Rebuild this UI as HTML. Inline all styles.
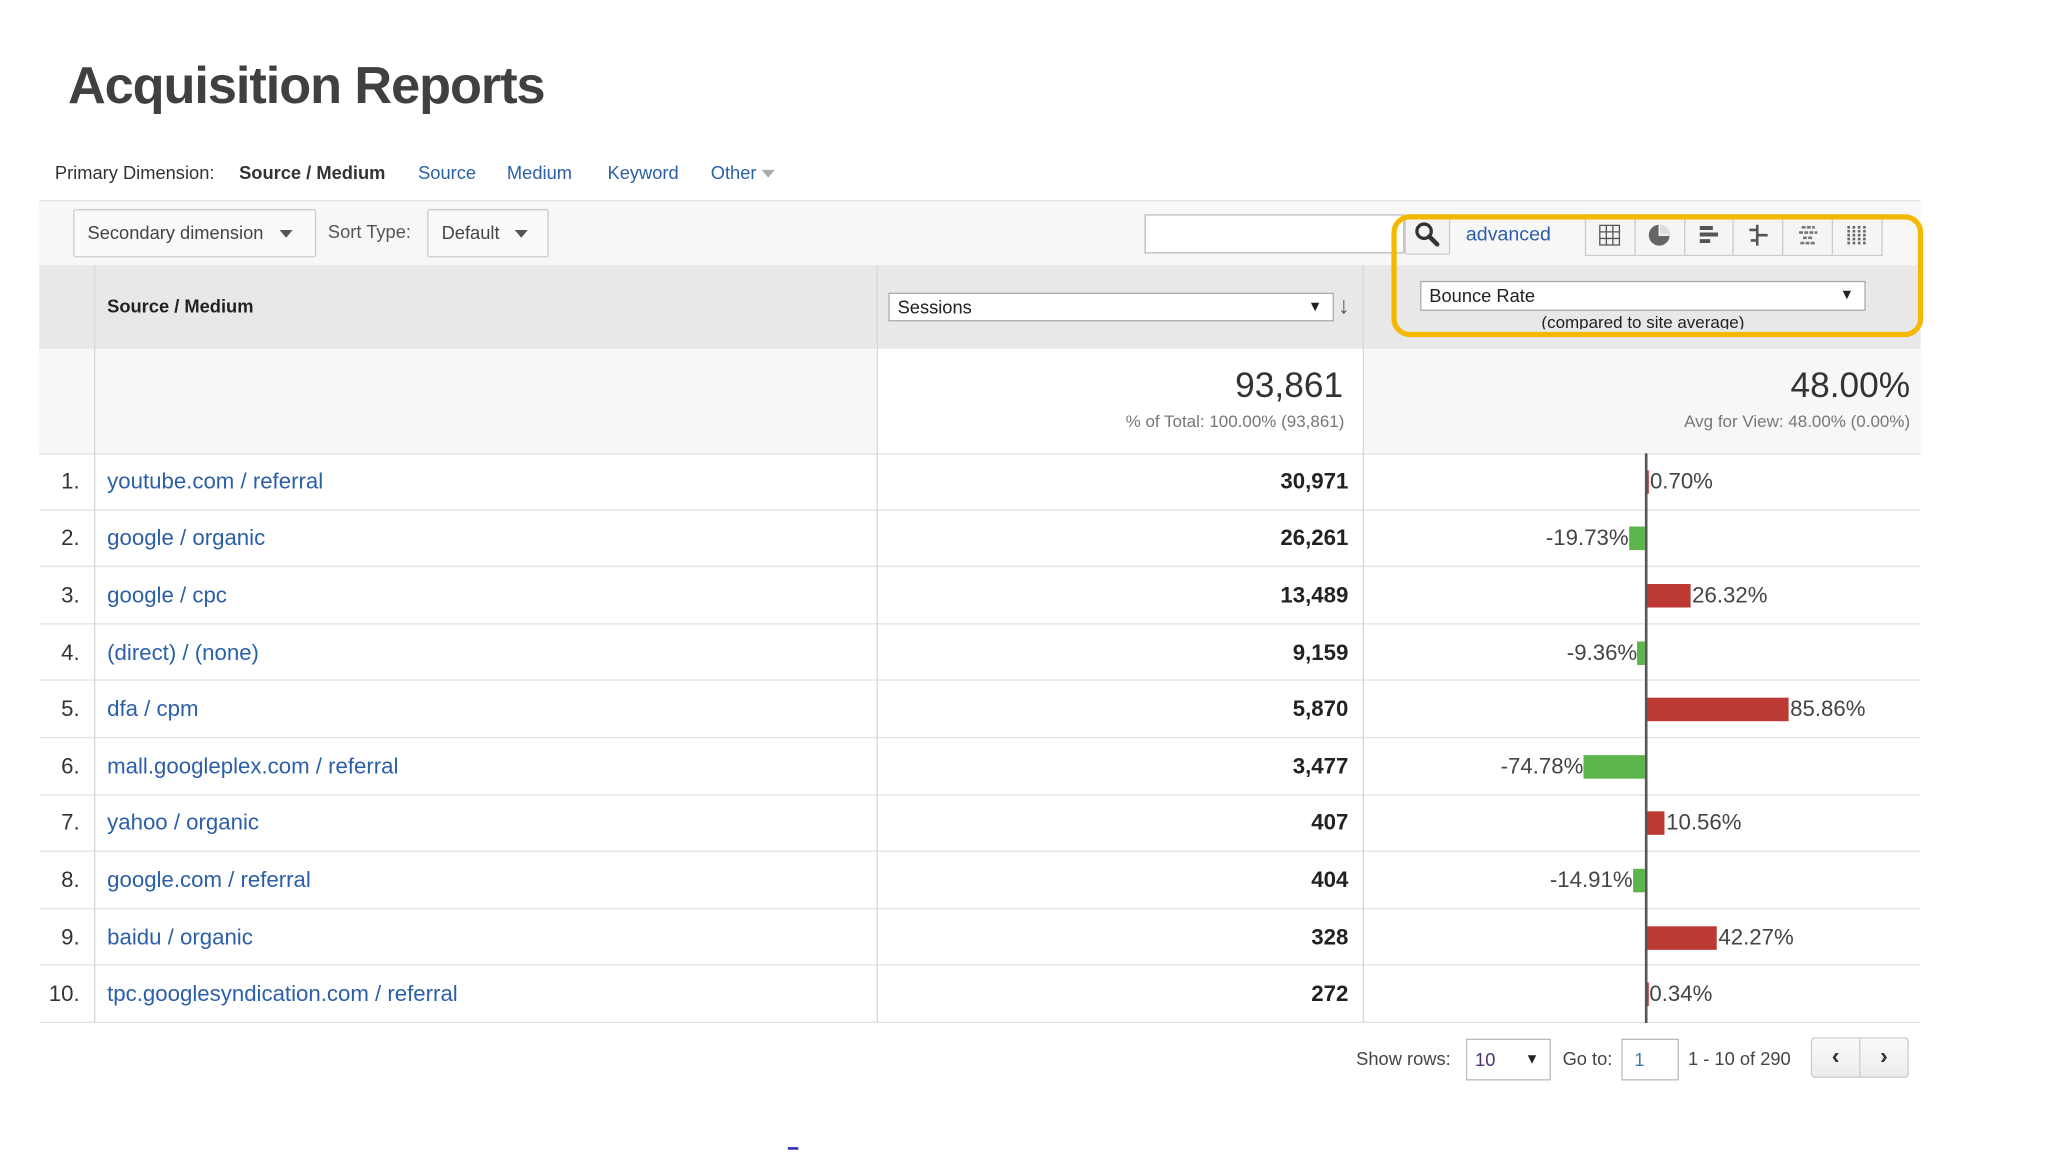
<!DOCTYPE html>
<html><head><meta charset="utf-8"><style>
html,body{margin:0;padding:0;background:#fff;overflow:hidden;width:2048px;height:1152px}
#w{position:absolute;left:0;top:0;width:1568px;height:882px;transform:scale(1.3065);transform-origin:0 0;font-family:"Liberation Sans",Arial,sans-serif;color:#333}
.a{position:absolute;white-space:nowrap}
.blue{color:#2b5fa8}
.btn{position:absolute;border:1px solid #ccc;border-radius:2px;background:#fafafa;box-sizing:border-box;font-size:14px;color:#444}
.tri{display:inline-block;width:0;height:0;border-left:5px solid transparent;border-right:5px solid transparent;border-top:6px solid #555}
.row{position:absolute;left:30px;width:1440px;height:43.6px;border-bottom:1px solid #e2e2e2;box-sizing:border-box}
</style></head><body><div id="w">
<div class="a" style="left:52px;top:44px;font-size:40px;font-weight:bold;color:#404040;letter-spacing:-0.8px">Acquisition Reports</div>

<div class="a" style="left:42px;top:124px;font-size:14px;color:#333">Primary Dimension:</div>
<div class="a" style="left:183px;top:124px;font-size:14px;font-weight:bold;color:#333">Source / Medium</div>
<div class="a blue" style="left:320px;top:124px;font-size:14px">Source</div>
<div class="a blue" style="left:388px;top:124px;font-size:14px">Medium</div>
<div class="a blue" style="left:465px;top:124px;font-size:14px">Keyword</div>
<div class="a blue" style="left:544px;top:124px;font-size:14px">Other <span class="tri" style="border-top-color:#aaa;vertical-align:middle"></span></div>

<div class="a" style="left:30px;top:153px;width:1440px;height:50px;background:#f7f7f7;border-top:1px solid #e3e3e3"></div>
<div class="btn" style="left:56px;top:160px;width:186px;height:37px;line-height:35px;padding-left:10px">Secondary dimension <span class="tri" style="margin-left:8px;vertical-align:middle"></span></div>
<div class="a" style="left:251px;top:169px;font-size:14px;color:#555">Sort Type:</div>
<div class="btn" style="left:327px;top:160px;width:93px;height:37px;line-height:35px;padding-left:10px">Default <span class="tri" style="margin-left:8px;vertical-align:middle"></span></div>
<div class="a" style="left:876px;top:164px;width:199px;height:30px;border:1px solid #bbb;background:#fff;box-sizing:border-box"></div>
<div class="btn" style="left:1075px;top:164px;width:35px;height:31px;background:#f3f3f3">
<svg width="33" height="29" viewBox="0 0 33 29"><circle cx="14" cy="12" r="5.5" fill="none" stroke="#333" stroke-width="2.5"/><path d="M18 16l6 6" stroke="#333" stroke-width="3.5" stroke-linecap="round"/></svg></div>
<div class="a blue" style="left:1122px;top:171px;font-size:15px">advanced</div>
<div class="a" style="left:1213px;top:164px;width:228px;height:32px;border:1px solid #ccc;box-sizing:border-box;background:#f5f5f5;display:flex">
 <div style="flex:1;border-right:1px solid #ccc;display:flex;align-items:center;justify-content:center"><svg width="18" height="18"><path d="M1.5 1.5h15v15h-15zM6.5 1.5v15M11.5 1.5v15M1.5 6.5h15M1.5 11.5h15" stroke="#555" fill="none"/></svg></div>
 <div style="flex:1;border-right:1px solid #ccc;display:flex;align-items:center;justify-content:center"><svg width="18" height="18"><circle cx="9" cy="9" r="8" fill="#666"/><path d="M9 1A8 8 0 0 1 17 9H9z" fill="#ddd"/><path d="M9 1v8h8" stroke="#fff" fill="none"/></svg></div>
 <div style="flex:1;border-right:1px solid #ccc;display:flex;align-items:center;justify-content:center"><svg width="18" height="18"><path d="M2 2h10v3H2zM2 7h14v3H2zM2 12h8v3H2z" fill="#555"/></svg></div>
 <div style="flex:1;border-right:1px solid #ccc;display:flex;align-items:center;justify-content:center"><svg width="18" height="18"><path d="M8 1v16M2 5h6M8 9h8M3 13h5" stroke="#555" stroke-width="2" fill="none"/></svg></div>
 <div style="flex:1;border-right:1px solid #ccc;display:flex;align-items:center;justify-content:center"><svg width="18" height="18"><path d="M4 3h10M2 7h14M5 11h8M3 15h12" stroke="#777" stroke-width="2" stroke-dasharray="3 1" fill="none"/></svg></div>
 <div style="flex:1;display:flex;align-items:center;justify-content:center"><svg width="18" height="18"><path d="M2 2v14M6 2v14M10 2v14M14 2v14" stroke="#666" stroke-width="2" stroke-dasharray="2 1" fill="none"/></svg></div>
</div>

<div class="a" style="left:30px;top:203px;width:1440px;height:64px;background:#e8e8e8"></div>
<div class="a" style="left:30px;top:267px;width:1440px;height:80px;background:#f7f7f7;border-bottom:1px solid #e2e2e2"></div>
<div class="a" style="left:671px;top:267px;width:372px;height:80px;background:#fff"></div>
<div class="a" style="left:82px;top:226px;font-size:14px;font-weight:bold;color:#222">Source / Medium</div>
<div class="a" style="left:680px;top:224px;width:341px;height:22px;border:1px solid #aaa;background:#fff;box-sizing:border-box;font-size:14px;line-height:20px;padding-left:6px;color:#222">Sessions<span style="position:absolute;right:8px;font-size:11px">▼</span></div>
<div class="a" style="left:1024px;top:224px;font-size:18px;color:#555">↓</div>
<div class="a" style="left:1087px;top:215px;width:341px;height:23px;border:1px solid #aaa;background:#fff;box-sizing:border-box;font-size:14px;line-height:21px;padding-left:6px;color:#222">Bounce Rate<span style="position:absolute;right:8px;font-size:11px">▼</span></div>
<div class="a" style="left:1087px;top:239px;width:341px;text-align:center;font-size:13px;color:#222;height:13px;overflow:hidden">(compared to site average)</div>

<div class="a" style="left:900px;top:280px;width:128px;text-align:right;font-size:27px;color:#333">93,861</div>
<div class="a" style="left:700px;top:315px;width:329px;text-align:right;font-size:13px;color:#777">% of Total: 100.00% (93,861)</div>
<div class="a" style="left:1100px;top:280px;width:362px;text-align:right;font-size:27px;color:#333">48.00%</div>
<div class="a" style="left:1100px;top:315px;width:362px;text-align:right;font-size:13px;color:#777">Avg for View: 48.00% (0.00%)</div>

<div id="rows"></div>
<div class="a" style="left:72px;top:203px;width:1px;height:580px;background:#d8d8d8"></div>
<div class="a" style="left:671px;top:203px;width:1px;height:580px;background:#d8d8d8"></div>
<div class="a" style="left:1043px;top:203px;width:1px;height:580px;background:#d8d8d8"></div>
<div class="a" style="left:1259px;top:347px;width:2px;height:436px;background:#555"></div>

<div class="a" style="left:1065px;top:164px;width:407px;height:94px;border:4px solid #f5b800;border-radius:14px;box-sizing:border-box"></div>

<div class="a" style="left:1038px;top:802px;font-size:14px;color:#444">Show rows:</div>
<div class="a" style="left:1122px;top:795px;width:65px;height:32px;border:1px solid #bbb;box-sizing:border-box;font-size:14px;line-height:30px;padding-left:6px;color:#503070">10<span style="position:absolute;right:8px;font-size:11px;color:#222">▼</span></div>
<div class="a" style="left:1196px;top:802px;font-size:14px;color:#444">Go to:</div>
<div class="a" style="left:1241px;top:795px;width:44px;height:32px;border:1px solid #bbb;box-sizing:border-box;font-size:14px;line-height:30px;padding-left:9px;color:#3a7ab0">1</div>
<div class="a" style="left:1292px;top:802px;font-size:14px;color:#444">1 - 10 of 290</div>
<div class="a" style="left:1386px;top:794px;width:75px;height:31px;border:1px solid #ccc;border-radius:3px;box-sizing:border-box;background:linear-gradient(#fafafa,#ececec);display:flex">
<div style="flex:1;border-right:1px solid #ccc;text-align:center;font-size:18px;font-weight:bold;line-height:27px">‹</div><div style="flex:1;text-align:center;font-size:18px;font-weight:bold;line-height:27px">›</div></div>
<div class="a" style="left:603px;top:878px;width:8px;height:2px;background:#3030c0"></div>
</div>
<script>
var d=[["youtube.com / referral","30,971",0.70],["google / organic","26,261",-19.73],["google / cpc","13,489",26.32],["(direct) / (none)","9,159",-9.36],["dfa / cpm","5,870",85.86],["mall.googleplex.com / referral","3,477",-74.78],["yahoo / organic","407",10.56],["google.com / referral","404",-14.91],["baidu / organic","328",42.27],["tpc.googlesyndication.com / referral","272",0.34]];
var h="";
d.forEach(function(r,i){var t=347+43.6*i;var c=t+21.8;
h+='<div class="row" style="top:'+t+'px"></div>';
h+='<div class="a" style="left:30px;width:31px;text-align:right;top:'+(c-10)+'px;font-size:17px;color:#333">'+(i+1)+'.</div>';
h+='<div class="a blue" style="left:82px;top:'+(c-10)+'px;font-size:17px">'+r[0]+'</div>';
h+='<div class="a" style="left:900px;width:132px;text-align:right;top:'+(c-10)+'px;font-size:17px;font-weight:bold;color:#222">'+r[1]+'</div>';
var v=r[2],lab=v.toFixed(2)+'%';
if(v>=0){var w=v*1.26;h+='<div class="a" style="left:1261px;top:'+(c-9)+'px;width:'+w+'px;height:18px;background:#bd3a34"></div>';
h+='<div class="a" style="left:'+(1262+w)+'px;top:'+(c-10)+'px;font-size:17px;color:#444">'+lab+'</div>';}
else{var w=-v*0.63;h+='<div class="a" style="left:'+(1259-w)+'px;top:'+(c-9)+'px;width:'+w+'px;height:18px;background:#5cb54a"></div>';
h+='<div class="a" style="right:'+(1568-1259+w)+'px;top:'+(c-10)+'px;font-size:17px;color:#444">'+lab+'</div>';}
});
document.getElementById("rows").outerHTML=h;
</script>
</body></html>
